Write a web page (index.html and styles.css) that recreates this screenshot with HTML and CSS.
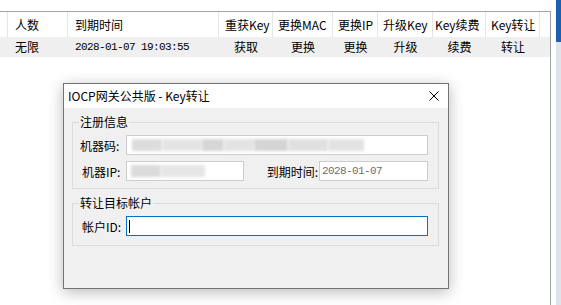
FILE: index.html
```html
<!DOCTYPE html>
<html lang="zh-CN">
<head>
    <meta charset="UTF-8">
    <title>IOCP网关公共版 - Key转让</title>
    <link rel="stylesheet" href="styles.css">
</head>
<body>
    <div class="screen">
        <div class="list">
            <div class="row head">
                <div class="cell c0"></div>
                <div class="cell c1">人数</div>
                <div class="cell c2">到期时间</div>
                <div class="cell c3">重获Key</div>
                <div class="cell c4">更换MAC</div>
                <div class="cell c5">更换IP</div>
                <div class="cell c6">升级Key</div>
                <div class="cell c7">Key续费</div>
                <div class="cell c8">Key转让</div>
                <div class="cell rest"></div>
            </div>
            <div class="row data">
                <div class="cell c0"></div>
                <div class="cell c1">无限</div>
                <div class="cell c2 mono">2028-01-07 19:03:55</div>
                <div class="cell c3 mid">获取</div>
                <div class="cell c4 mid">更换</div>
                <div class="cell c5 mid">更换</div>
                <div class="cell c6 mid">升级</div>
                <div class="cell c7 mid">续费</div>
                <div class="cell c8 mid">转让</div>
                <div class="cell rest"></div>
            </div>
        </div>
        <div class="edge"></div>
    </div>

    <div class="dialog">
        <div class="titlebar">
            <span class="title">IOCP网关公共版 - Key转让</span>
            <svg class="close" width="10" height="10" viewBox="0 0 10 10">
                <path d="M0.5 0.5 L9.5 9.5 M9.5 0.5 L0.5 9.5" stroke="#000" stroke-width="1" fill="none"/>
            </svg>
        </div>
        <div class="dlg-body">
            <fieldset class="group">
                <legend>注册信息</legend>
                <div class="field-row">
                    <label class="lbl">机器码:</label>
                    <div class="box wide">
                        <span class="smear s1"></span><span class="smear s2"></span><span class="smear s3"></span><span class="smear s4"></span><span class="smear s5"></span><span class="smear s6"></span><span class="smear s7"></span>
                    </div>
                </div>
                <div class="field-row">
                    <label class="lbl inset">机器IP:</label>
                    <div class="box ip">
                        <span class="smear s8"></span><span class="smear s9"></span>
                    </div>
                    <label class="lbl lbl-date">到期时间:</label>
                    <div class="box date">2028-01-07</div>
                </div>
            </fieldset>
            <fieldset class="group second">
                <legend>转让目标帐户</legend>
                <div class="field-row">
                    <label class="lbl inset">帐户ID:</label>
                    <div class="box wide focus"><span class="caret"></span></div>
                </div>
            </fieldset>
        </div>
    </div>
</body>
</html>
```

FILE: styles.css
```css
html, body {
    margin: 0;
    padding: 0;
}

body {
    width: 561px;
    height: 305px;
    overflow: hidden;
    background: #ffffff;
    font-family: "Noto Sans CJK SC", "Noto Sans", sans-serif;
    font-size: 12px;
    color: #000;
    position: relative;
}

.screen {
    display: flex;
    height: 305px;
}

/* list view behind the dialog */
.list {
    width: 551px;
    margin-top: 11px;
    border-top: 1px solid #a5a5a5;
    border-right: 1px solid #a0a0a0;
}

.row {
    display: flex;
}
.row.head {
    height: 25px;
    background: #fff;
}
.row.data {
    height: 20px;
    background: #efefef;
}

.cell {
    box-sizing: border-box;
    white-space: nowrap;
    overflow: hidden;
    padding-left: 7px;
    display: flex;
    align-items: center;
}
.head .cell {
    border-right: 1px solid #e5e5e5;
    line-height: 25px;
}
.head .rest {
    border-right: none;
}
.data .cell {
    line-height: 20px;
}
.cell.mid {
    justify-content: center;
    padding-left: 0;
}
.c0 { width: 8px; padding-left: 0; }
.c1 { width: 60px; }
.c2 { width: 151px; }
.c3 { width: 54px; padding-left: 6px; }
.c4 { width: 60px; padding-left: 5px; }
.c5 { width: 45px; padding-left: 5px; }
.c6 { width: 55px; padding-left: 5px; }
.c7 { width: 53px; padding-left: 2px; }
.c8 { width: 54px; padding-left: 5px; }
.rest { flex: 1; }

.mono {
    font-family: "Liberation Mono", "DejaVu Sans Mono", monospace;
    font-size: 11px;
    letter-spacing: -0.6px;
}

.edge {
    width: 5px;
    margin-left: 5px;
    background: linear-gradient(#1d5fae 0, #1d5fae 42px, #dfe4ea 42px);
}

/* dialog */
.dialog {
    position: absolute;
    left: 63px;
    top: 83px;
    width: 386px;
    height: 206px;
    box-sizing: border-box;
    border: 1px solid #737373;
    background: #f0f0f0;
    box-shadow: 0 3px 14px rgba(0, 0, 0, 0.28);
}

.titlebar {
    height: 24px;
    background: #fff;
    display: flex;
    align-items: center;
    justify-content: space-between;
    padding-left: 4px;
    padding-right: 9px;
}
.title {
    line-height: 24px;
}

.dlg-body {
    padding: 6px 9px 0 8px;
}

.group {
    margin: 0;
    padding: 5px 10px 7px 7px;
    border: 1px solid #dcdcdc;
    min-width: 0;
}
.group legend {
    padding: 0 1px;
    margin-left: -1px;
    line-height: 16px;
    font-size: 12px;
}
.group.second {
    margin-top: 6px;
    padding-bottom: 9px;
}

.field-row {
    display: flex;
    align-items: center;
    height: 20px;
}
.field-row + .field-row {
    margin-top: 6px;
}

.lbl {
    width: 46px;
    flex: none;
    box-sizing: border-box;
    white-space: nowrap;
}
.lbl.inset {
    padding-left: 2px;
}
.lbl-date {
    flex: 1;
    width: auto;
    text-align: right;
    padding-right: 1px;
}

.box {
    box-sizing: border-box;
    height: 20px;
    background: #fff;
    border: 1px solid #cdcdcd;
    display: flex;
    align-items: center;
    overflow: hidden;
}
.box.wide { width: 302px; }
.box.ip { width: 118px; }
.box.date {
    width: 109px;
    padding-left: 2px;
    color: #6d6d6d;
    font-family: "Liberation Mono", "DejaVu Sans Mono", monospace;
    font-size: 11px;
    letter-spacing: -0.6px;
}
.box.focus {
    border-color: #0a6fc2;
}

.caret {
    width: 1px;
    height: 13px;
    margin-left: 2px;
    background: #000;
}

/* blurred (redacted) values */
.smear {
    height: 12px;
    filter: blur(1.6px);
    background: #d9d9d9;
}
.s1 { width: 30px; margin-left: 5px; background: #dcdcdc; }
.s2 { width: 40px; background: #e4e4e4; }
.s3 { width: 22px; background: #d6d6d6; }
.s4 { width: 30px; background: #e3e3e3; }
.s5 { width: 34px; background: #d4d4d4; }
.s6 { width: 40px; background: #e0e0e0; }
.s7 { width: 36px; background: #e2e2e2; }
.s8 { width: 30px; margin-left: 4px; background: #dadada; }
.s9 { width: 44px; background: #e6e6e6; }
```
